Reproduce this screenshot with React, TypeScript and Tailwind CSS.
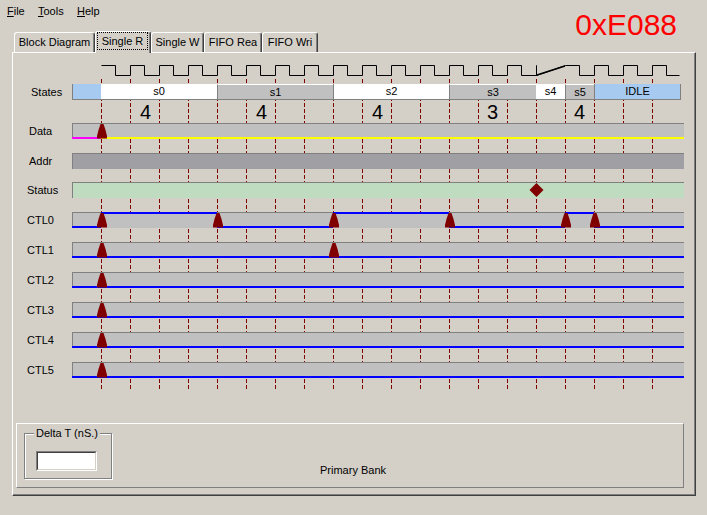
import React from "react"

type Segment = { label: string; w: string; cls: string }

const stateSegments: Segment[] = [
  { label: "", w: "w-[29px]", cls: "bg-[#a6caf0] border-l border-[#808080]" },
  { label: "s0", w: "w-[116px]", cls: "bg-white" },
  { label: "s1", w: "w-[116px]", cls: "bg-[#c0c0c0] border-l border-t border-t-white border-l-[#808080]" },
  { label: "s2", w: "w-[116px]", cls: "bg-white border-l border-[#808080]" },
  { label: "s3", w: "w-[87px]", cls: "bg-[#c0c0c0] border-l border-t border-t-white border-l-[#808080]" },
  { label: "s4", w: "w-[29px]", cls: "bg-white" },
  { label: "s5", w: "w-[29px]", cls: "bg-[#c0c0c0] border-l border-t border-t-white border-l-[#808080]" },
  { label: "IDLE", w: "w-[87px]", cls: "bg-[#a6caf0] border-l border-r border-[#808080]" },
]

// centres of the cycle counts, relative to the bar origin (x = 72)
const counts = [
  { n: "4", x: 73.5 },
  { n: "4", x: 189.5 },
  { n: "4", x: 305.5 },
  { n: "3", x: 420.5 },
  { n: "4", x: 507.5 },
]

type Signal = {
  label: string
  pl: string
  bg: string
  mb: string
  kind: "data" | "ctl" | "none"
  highs?: [number, number][]
  markers?: number[]
  diamond?: number
}

const signals: Signal[] = [
  { label: "Data", pl: "pl-[16px]", bg: "bg-[#c0c0c0]", mb: "mb-[14px]", kind: "data", markers: [101] },
  { label: "Addr", pl: "pl-[16px]", bg: "bg-[#a0a0a4]", mb: "mb-[13px]", kind: "none" },
  { label: "Status", pl: "pl-[14px]", bg: "bg-[#c0dcc0]", mb: "mb-[14px]", kind: "none", diamond: 536 },
  {
    label: "CTL0",
    pl: "pl-[14px]",
    bg: "bg-[#c0c0c0]",
    mb: "mb-[14px]",
    kind: "ctl",
    highs: [
      [101, 217],
      [333, 449],
      [565, 594],
    ],
    markers: [101, 217, 333, 449, 565, 594],
  },
  { label: "CTL1", pl: "pl-[14px]", bg: "bg-[#c0c0c0]", mb: "mb-[14px]", kind: "ctl", highs: [], markers: [101, 333] },
  { label: "CTL2", pl: "pl-[14px]", bg: "bg-[#c0c0c0]", mb: "mb-[14px]", kind: "ctl", highs: [], markers: [101] },
  { label: "CTL3", pl: "pl-[14px]", bg: "bg-[#c0c0c0]", mb: "mb-[14px]", kind: "ctl", highs: [], markers: [101] },
  { label: "CTL4", pl: "pl-[14px]", bg: "bg-[#c0c0c0]", mb: "mb-[14px]", kind: "ctl", highs: [], markers: [101] },
  { label: "CTL5", pl: "pl-[14px]", bg: "bg-[#c0c0c0]", mb: "mb-[14px]", kind: "ctl", highs: [], markers: [101] },
]

const dashXs = Array.from({ length: 20 }, (_, k) => 101 + 29 * k)

function clockPath() {
  let d = "M101.5,65.5"
  for (let p = 101; p < 536; p += 29) {
    d += ` H${p + 14.5} V75.5 H${p + 29.5}`
    if (p + 29 < 536) d += " V65.5"
  }
  d += " V65.5 V75.5 L565.5,65.5"
  for (let p = 565; p < 680; p += 29) {
    d += ` H${p + 14.5} V75.5`
    if (p + 29 < 680) d += ` H${p + 29.5} V65.5`
  }
  d += " H679.5"
  return d
}

function Marker({ at }: { at: number }) {
  const c = at + 1
  return (
    <polygon
      points={`${c - 5},15.5 ${c - 5},13 ${c - 3.5},7 ${c - 1.5},1 ${c + 1.5},1 ${c + 3.5},7 ${c + 5},13 ${c + 5},15.5`}
      fill="#800000"
    />
  )
}

function SignalLines({ s }: { s: Signal }) {
  if (s.kind === "data") {
    return (
      <>
        <rect x={72} y={14} width={29} height={2} fill="#ff00ff" />
        <rect x={101} y={14} width={583} height={2} fill="#ffff00" />
      </>
    )
  }
  if (s.kind !== "ctl") return null
  const highs = s.highs ?? []
  const lows: [number, number][] = []
  let cur = 72
  for (const [a, b] of highs) {
    if (a > cur) lows.push([cur, a])
    cur = b
  }
  if (cur < 684) lows.push([cur, 684])
  return (
    <>
      {highs.map(([a, b]) => (
        <rect key={`h${a}`} x={a} y={0} width={b - a} height={2} fill="#0000ff" />
      ))}
      {lows.map(([a, b]) => (
        <rect key={`l${a}`} x={a} y={14} width={b - a} height={2} fill="#0000ff" />
      ))}
    </>
  )
}

function SignalRow({ s }: { s: Signal }) {
  return (
    <div className={`flex h-[16px] items-center ${s.mb}`}>
      <div className={`w-[59px] ${s.pl}`}>{s.label}</div>
      <div className={`relative h-[16px] w-[612px] border-l border-t border-[#808080] ${s.bg}`}>
        <svg
          className="absolute -left-px -top-px overflow-visible"
          width={612}
          height={16}
          viewBox="72 0 612 16"
        >
          <SignalLines s={s} />
          {s.diamond !== undefined && (
            <polygon
              points={`${s.diamond + 0.5},1 ${s.diamond + 7.5},8 ${s.diamond + 0.5},15 ${s.diamond - 6.5},8`}
              fill="#800000"
            />
          )}
          {(s.markers ?? []).map((m) => (
            <Marker key={m} at={m} />
          ))}
        </svg>
      </div>
    </div>
  )
}

function Chart() {
  return (
    <div className="relative h-[340px] w-[680px]">
      {/* grid of cycle boundaries and the clock, drawn behind the lanes */}
      <svg className="absolute left-0 top-0" width={680} height={340} viewBox="13 53 680 340">
        {dashXs.map((x) => (
          <line
            key={x}
            x1={x + 0.5}
            y1={79}
            x2={x + 0.5}
            y2={389}
            stroke="#800000"
            strokeWidth={1}
            strokeDasharray="4 2"
          />
        ))}
        <path d={clockPath()} fill="none" stroke="#000" strokeWidth={1} />
        <line x1={537} y1={75} x2={565} y2={66} stroke="#000" strokeWidth={1.5} />
      </svg>

      <div className="relative pt-[31px]">
        <div className="flex h-[16px] items-center">
          <div className="w-[59px] pl-[18px]">States</div>
          <div className="flex h-[16px] w-[612px]">
            {stateSegments.map((seg, i) => (
              <div
                key={i}
                className={`flex h-[16px] items-center justify-center border-b border-b-[#808080] ${seg.w} ${seg.cls}`}
              >
                {seg.label}
              </div>
            ))}
          </div>
        </div>

        <div className="flex h-[23px]">
          <div className="w-[59px]" />
          <div className="relative h-[23px] w-[612px]">
            {counts.map((c, i) => (
              <span
                key={i}
                className="absolute top-[2px] -translate-x-1/2 text-[20px] leading-none"
                style={{ left: c.x }}
              >
                {c.n}
              </span>
            ))}
          </div>
        </div>

        {signals.map((s) => (
          <SignalRow key={s.label} s={s} />
        ))}
      </div>
    </div>
  )
}

function Tab({ label, w, active }: { label: string; w: string; active?: boolean }) {
  if (active) {
    return (
      <div
        className={`relative z-10 h-[22px] self-start rounded-t-[3px] border-l border-r border-t border-l-white border-r-[#404040] border-t-white bg-[#d4d0c8] pl-px pt-0 shadow-[inset_-1px_0_0_#808080] ${w}`}
      >
        <div className="flex h-[18px] w-[51px] items-center justify-center border border-dotted border-black">
          {label}
        </div>
      </div>
    )
  }
  return (
    <div
      className={`flex h-[20px] items-center justify-center rounded-t-[3px] border-l border-r border-t border-l-white border-r-[#404040] border-t-white shadow-[inset_-1px_0_0_#808080] ${w}`}
    >
      {label}
    </div>
  )
}

export default function App() {
  return (
    <div className="h-[515px] w-[707px] overflow-hidden bg-[#d4d0c8] font-['Liberation_Sans',Arial,sans-serif] text-[11px] leading-[13px] text-black">
      <div className="flex h-[31px] items-start justify-between">
        <div className="flex pl-[7px] pt-[5px]">
          <span className="w-[31px]">
            <span className="underline">F</span>ile
          </span>
          <span className="w-[39px]">
            <span className="underline">T</span>ools
          </span>
          <span>
            <span className="underline">H</span>elp
          </span>
        </div>
        <div className="mr-[30px] mt-[10px] text-[30px] leading-none text-[#ff0000]">0xE088</div>
      </div>

      <div className="flex h-[21px] items-end pl-[14px]">
        <Tab label="Block Diagram" w="w-[81px]" />
        <Tab label="Single R" w="w-[56px]" active />
        <Tab label="Single W" w="w-[53px]" />
        <Tab label="FIFO Rea" w="w-[58px]" />
        <Tab label="FIFO Wri" w="w-[56px]" />
      </div>

      <div className="ml-[12px] h-[444px] w-[684px] border border-b-[#404040] border-l-white border-r-[#404040] border-t-white shadow-[inset_-1px_-1px_0_#808080]">
        <Chart />

        <div className="ml-[3px] mt-[30px] flex h-[65px] w-[668px] items-start border border-b-[#808080] border-l-white border-r-[#808080] border-t-white">
          <div className="relative ml-[7px] mt-[9px] h-[46px] w-[88px] border border-[#808080] shadow-[1px_1px_0_#fff,inset_1px_1px_0_#fff]">
            <span className="absolute left-[9px] top-[-7px] bg-[#d4d0c8] px-[2px]">Delta T (nS.)</span>
            <div className="ml-[11px] mt-[17px] h-[20px] w-[61px] border border-b-white border-l-[#808080] border-r-white border-t-[#808080]">
              <div className="h-full w-full border border-b-[#d4d0c8] border-l-[#404040] border-r-[#d4d0c8] border-t-[#404040] bg-white" />
            </div>
          </div>
          <div className="ml-[208px] mt-[40px]">Primary Bank</div>
        </div>
      </div>
    </div>
  )
}
